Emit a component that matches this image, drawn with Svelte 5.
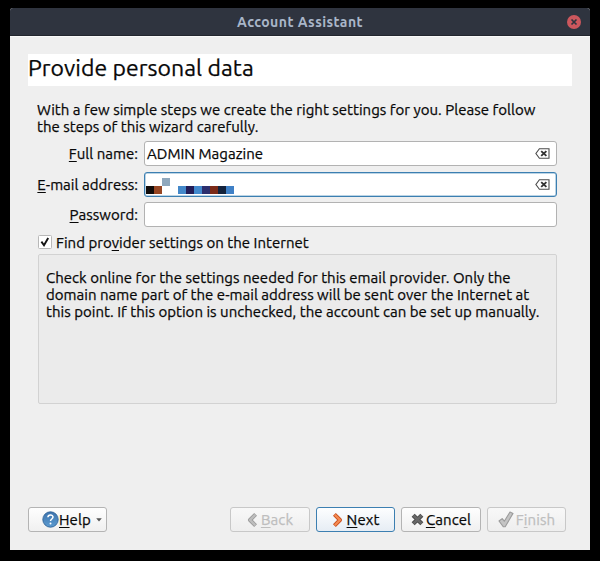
<script>
  const labels = {
    name: ['F', 'ull name:'],
    email: ['E', '-mail address:'],
    password: ['P', 'assword:']
  };
  const mosaic = [
    [0, 8, '#120c0a'], [8, 8, '#964522'], [16, 0, '#8fa8bd'],
    [32, 8, '#4488c9'], [40, 8, '#231d57'], [48, 8, '#4289cd'],
    [56, 8, '#2c2f6e'], [64, 8, '#7c2b18'], [72, 8, '#14233c'], [80, 8, '#3f80c6']
  ];
</script>

{#snippet clearIcon()}
  <svg class="clear" width="15" height="11" viewBox="0 0 15 11">
    <path d="M4.4 .7H14V10.3H4.4L.9 5.5Z" fill="#fff" stroke="#4b4b4b" stroke-width="1.1" />
    <path d="M6.2 3.1l5.2 4.8M11.4 3.1L6.2 7.9" stroke="#333" stroke-width="1.9" />
  </svg>
{/snippet}

<div class="desktop">
  <div class="window">
    <header>
      <span class="title">Account Assistant</span>
      <svg class="close" width="14" height="14" viewBox="0 0 14 14">
        <circle cx="7" cy="7" r="7" fill="#cc575d" />
        <path d="M4.5 4.5l5 5M9.5 4.5L4.5 9.5" stroke="#2f343f" stroke-width="1.7" />
      </svg>
    </header>
    <main>
      <h1>Provide personal data</h1>
      <section class="body">
        <p class="intro">With a few simple steps we create the right settings for you. Please follow<br />the steps of this wizard carefully.</p>
        <div class="row">
          <span class="label"><u>{labels.name[0]}</u>{labels.name[1]}</span>
          <div class="field"><span class="value">ADMIN Magazine</span>{@render clearIcon()}</div>
        </div>
        <div class="row">
          <span class="label"><u>{labels.email[0]}</u>{labels.email[1]}</span>
          <div class="field focus">
            <svg class="mosaic" width="88" height="16" viewBox="0 0 88 16" shape-rendering="crispEdges">
              {#each mosaic as [x, y, color]}
                <rect {x} {y} width="8" height="8" fill={color} />
              {/each}
            </svg>
            {@render clearIcon()}
          </div>
        </div>
        <div class="row">
          <span class="label"><u>{labels.password[0]}</u>{labels.password[1]}</span>
          <div class="field"></div>
        </div>
        <div class="check">
          <svg width="14" height="14" viewBox="0 0 14 14">
            <rect x=".5" y=".5" width="13" height="13" rx="1" fill="#fff" stroke="#b8b8b8" />
            <path d="M3.4 6.6L6 10.2L10.2 3" fill="none" stroke="#151515" stroke-width="1.9" />
          </svg>
          <span>Find pro<u>v</u>ider settings on the Internet</span>
        </div>
        <div class="group">
          Check online for the settings needed for this email provider. Only the<br />
          domain name part of the e-mail address will be sent over the Internet at<br />
          this point. If this option is unchecked, the account can be set up manually.
        </div>
      </section>
      <footer>
        <button class="help">
          <svg width="17" height="17" viewBox="0 0 17 17">
            <defs><linearGradient id="blue" x2="0" y2="1"><stop stop-color="#3d74ae" /><stop offset="1" stop-color="#5c9bd0" /></linearGradient></defs>
            <circle cx="8.5" cy="8.5" r="7.7" fill="url(#blue)" stroke="#326599" stroke-width=".9" />
            <path d="M5.9 6.3C6 3.2 11 3.2 11 6.1C11 8 8.5 8 8.5 10" fill="none" stroke="#fff" stroke-width="1.5" />
            <circle cx="8.5" cy="12.5" r="1" fill="#fff" />
          </svg>
          <span><u>H</u>elp</span>
          <svg class="arrow" width="6" height="4" viewBox="0 0 6 4"><path d="M.2 .3H5.8L3 3.5Z" fill="#555" /></svg>
        </button>
        <div class="actions">
          <button class="back disabled">
            <svg width="12" height="16" viewBox="0 0 12 16">
              <path d="M8.6 2.4L3 8L8.6 13.6" fill="none" stroke="#9c9c9c" stroke-width="4" stroke-linejoin="round" />
              <path d="M8.2 2.8L3 8L8.2 13.2" fill="none" stroke="#bebebe" stroke-width="2.3" stroke-linejoin="round" />
            </svg>
            <span><u>B</u>ack</span>
          </button>
          <button class="next">
            <svg width="12" height="16" viewBox="0 0 12 16">
              <path d="M2.4 2.4L8 8L2.4 13.6" fill="none" stroke="#c9501f" stroke-width="4" stroke-linejoin="round" />
              <path d="M2.8 2.8L8 8L2.8 13.2" fill="none" stroke="#f58b52" stroke-width="2.2" stroke-linejoin="round" />
            </svg>
            <span><u>N</u>ext</span>
          </button>
          <button class="cancel">
            <svg width="13" height="13" viewBox="0 0 12 12">
              <path d="M2 2L10 10M10 2L2 10" stroke="#484848" stroke-width="4" />
              <path d="M2.2 2.2L9.8 9.8M9.8 2.2L2.2 9.8" stroke="#686868" stroke-width="2.4" />
            </svg>
            <span><u>C</u>ancel</span>
          </button>
          <button class="finish disabled">
            <svg width="16" height="17" viewBox="0 0 16 17">
              <path d="M1 10L4.2 7.6L6.3 10.2L12 1L15 2.4L7.2 15.8H5.4Z" fill="#c4c4c4" stroke="#9b9b9b" stroke-width="1.1" stroke-linejoin="round" />
            </svg>
            <span>F<u>i</u>nish</span>
          </button>
        </div>
      </footer>
    </main>
  </div>
</div>

<style>
  :global(body) { background: #000; }
  .desktop {
    box-sizing: border-box;
    width: 600px;
    height: 561px;
    padding: 8px 10px 11px;
    background: #000;
    font-family: Ubuntu, "Noto Sans", "Open Sans", sans-serif;
    font-size: 15px;
    letter-spacing: .02px;
    line-height: 17px;
    color: #080808;
    white-space: nowrap;
    overflow: hidden;
    -webkit-text-stroke: .25px currentColor;
  }
  .window {
    height: 542px;
    display: flex;
    flex-direction: column;
    background: #efefef;
    border-radius: 3px 3px 0 0;
    overflow: hidden;
  }
  header {
    box-sizing: border-box;
    flex: none;
    height: 28px;
    display: grid;
    grid-template-columns: 1fr auto 1fr;
    align-items: center;
    padding: 0 9px;
    background: #2f343f;
    border-bottom: 1px solid #22262e;
    color: #a9b6c9;
    font-size: 14px;
    font-weight: 700;
    -webkit-text-stroke: 0;
  }
  .title { grid-column: 2; letter-spacing: .45px; padding-top: 1px; }
  .close { justify-self: end; }
  main {
    flex: 1;
    display: flex;
    flex-direction: column;
    padding: 17px 18px 18px;
    border-top: 1px solid #fafafa;
  }
  h1 {
    flex: none;
    margin: 0;
    height: 32px;
    line-height: 28px;
    background: #fff;
    font-size: 23px;
    font-weight: 400;
    letter-spacing: .05px;
  }
  u { text-decoration: underline; text-decoration-thickness: 1px; text-underline-offset: 2px; text-decoration-skip-ink: none; }
  .body { flex: 1; padding: 15px 15px 0 10px; }
  .intro { margin: 0 0 6px -1px; }
  .row { display: flex; align-items: center; gap: 6px; margin-bottom: 6px; }
  .row:nth-of-type(2) { margin-bottom: 5px; }
  .label { width: 100px; display: flex; justify-content: flex-end; }
  .field {
    box-sizing: border-box;
    flex: 1;
    height: 25px;
    display: flex;
    align-items: center;
    padding: 0 6px 0 2px;
    border: 1px solid #b2b2b2;
    border-radius: 3px;
    background: #fff;
  }
  .focus { border-color: #3c7fb1; box-shadow: inset 0 0 0 .5px #79a9cb; padding-left: 1px; }
  .clear { margin-left: auto; }
  .mosaic { margin-top: 2px; }
  .check { display: flex; align-items: center; gap: 4px; height: 17px; margin-top: 7px; }
  .check svg { margin-top: -1px; }
  .group {
    box-sizing: border-box;
    height: 150px;
    margin-top: 3px;
    padding: 14px 7px;
    border: 1px solid #d2d2d2;
    border-radius: 2px;
    background: #ebebeb;
  }
  footer { display: flex; justify-content: space-between; padding-right: 6px; }
  .actions { display: flex; gap: 6px; }
  button {
    box-sizing: border-box;
    width: 80px;
    height: 25px;
    display: flex;
    align-items: center;
    justify-content: center;
    padding: 0;
    border: 1px solid #b4b4b4;
    border-radius: 3px;
    background: linear-gradient(#fefefe, #f0f0f0);
    font: inherit;
    letter-spacing: .1px;
    color: #080808;
  }
  .help { width: 79px; justify-content: flex-start; padding-left: 13px; }
  .arrow { margin-left: 5px; }
  .next { width: 79px; border-color: #3c7fb1; background: linear-gradient(#fdfeff, #e6edf4); }
  .finish { width: 79px; }
  .disabled { color: #bebebe; border-color: #c8c8c8; background: linear-gradient(#f8f8f8, #eee); }
  .actions svg { margin-right: 2px; }
  .actions .next svg { margin-right: 3px; }
</style>
